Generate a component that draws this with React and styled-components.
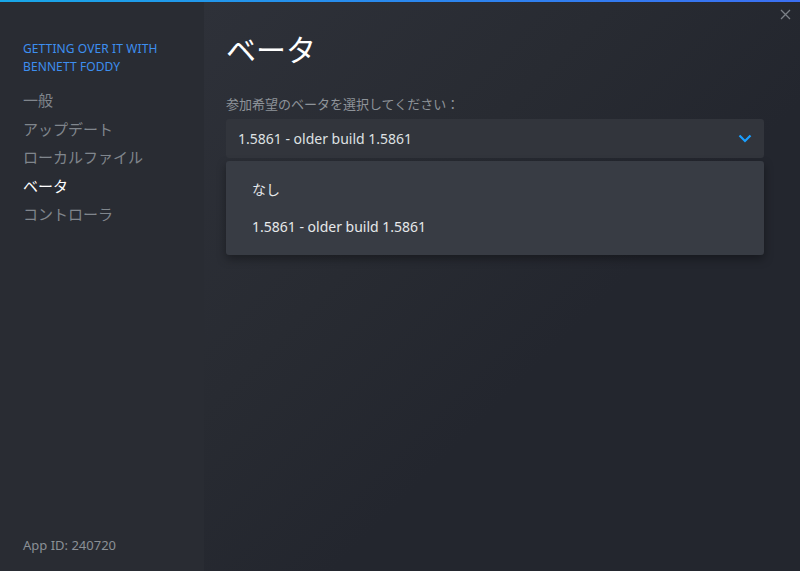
import React from 'react';
import styled, { createGlobalStyle } from 'styled-components';

const GlobalStyle = createGlobalStyle`
html, body {
  margin:0;
  padding:0;
  background:#23262e;
}
body {
  font-family:"Noto Sans", "Noto Sans CJK JP", sans-serif;
}
`;

const Window = styled.div`
width:800px;
height:571px;
display:flex;
flex-direction:column;
overflow:hidden;
position:relative;
`;

const TopLine = styled.div`
height:2px;
flex-shrink:0;
background:linear-gradient(90deg, #18a7e8 0%, #2a88ee 50%, #3b6ff2 100%);
`;

const Body = styled.div`
flex:1;
display:flex;
min-height:0;
`;

const Sidebar = styled.div`
width:204px;
flex-shrink:0;
background:#292c33;
display:flex;
flex-direction:column;
padding:38px 0 17px 23px;
box-sizing:border-box;
`;

const GameTitle = styled.div`
color:#3d8ff0;
font-size:12px;
line-height:18px;
text-transform:uppercase;
letter-spacing:0.1px;
margin-bottom:10px;
`;

const NavItem = styled.div`
font-size:15px;
line-height:28.5px;
color:${p => (p.active ? '#ffffff' : '#80868d')};
`;

const AppId = styled.div`
margin-top:auto;
font-size:13px;
color:#8b9096;
`;

const Main = styled.div`
flex:1;
background:linear-gradient(135deg, #2e3139 0%, #282b32 35%, #23262e 60%, #23262e 100%);
padding:24px 36px 0 22px;
box-sizing:border-box;
position:relative;
`;

const Heading = styled.h1`
margin:0;
font-weight:400;
font-size:30px;
line-height:48px;
color:#ffffff;
`;

const Label = styled.div`
margin-top:21px;
font-size:13px;
color:#8e9399;
line-height:18px;
`;

const Select = styled.div`
margin-top:6px;
height:39px;
background:#32353c;
border-radius:3px;
display:flex;
align-items:center;
justify-content:space-between;
padding:0 12px;
color:#dfe1e3;
font-size:14px;
`;

const Menu = styled.div`
margin-top:3px;
background:#383c44;
border-radius:3px;
box-shadow:0 4px 10px rgba(0,0,0,0.35);
padding:10px 0 10px 26px;
`;

const Option = styled.div`
font-size:14px;
line-height:19px;
color:#e6e8ea;
padding:9px 0;
`;

const CloseButton = styled.div`
position:absolute;
top:5px;
right:8px;
width:14px;
height:14px;
display:flex;
align-items:center;
justify-content:center;
`;

const Chevron = () => (
  <svg width="14" height="9" viewBox="0 0 14 9">
    <path d="M1.5 1.5 L7 7 L12.5 1.5" fill="none" stroke="#1a9fff" strokeWidth="2.2" />
  </svg>
);

const CloseIcon = () => (
  <svg width="11" height="11" viewBox="0 0 11 11">
    <path d="M1 1 L10 10 M10 1 L1 10" stroke="#7b8087" strokeWidth="1.3" />
  </svg>
);

const navItems = ['一般', 'アップデート', 'ローカルファイル', 'ベータ', 'コントローラ'];

const App = () => {
  const active = 'ベータ';
  const branch = '1.5861 - older build 1.5861';
  return (
    <Window>
      <GlobalStyle />
      <TopLine />
      <Body>
        <Sidebar>
          <GameTitle>Getting Over It with<br />Bennett Foddy</GameTitle>
          {navItems.map(item => (
            <NavItem key={item} active={item === active}>{item}</NavItem>
          ))}
          <AppId>App ID: 240720</AppId>
        </Sidebar>
        <Main>
          <Heading>ベータ</Heading>
          <Label>参加希望のベータを選択してください：</Label>
          <Select>
            <span>{branch}</span>
            <Chevron />
          </Select>
          <Menu>
            <Option>なし</Option>
            <Option>{branch}</Option>
          </Menu>
          <CloseButton><CloseIcon /></CloseButton>
        </Main>
      </Body>
    </Window>
  );
};

export default App;
